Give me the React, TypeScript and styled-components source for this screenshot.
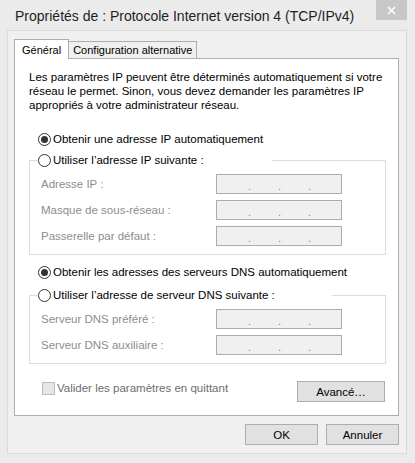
import styled, { createGlobalStyle } from 'styled-components';

const Global = createGlobalStyle`
  html, body {
    margin: 0;
    padding: 0;
    background: #ebebeb;
  }
  body {
    font-family: "Liberation Sans", Arial, sans-serif;
  }
`;

const Window = styled.div`
  width: 415px;
  height: 463px;
  box-sizing: border-box;
  padding: 0 8px 0 7px;
  background: #ebebeb;
  display: flex;
  flex-direction: column;
`;

const TitleBar = styled.div`
  height: 30px;
  display: flex;
  justify-content: space-between;
  align-items: flex-start;
`;

const Title = styled.div`
  padding: 7px 0 0 8px;
  font-size: 14px;
  line-height: 18px;
  color: #1e1e1e;
  white-space: nowrap;
`;

const Close = styled.div`
  width: 31px;
  height: 20px;
  flex-shrink: 0;
  background: #c7c7c7;
  display: flex;
  align-items: center;
  justify-content: center;
`;

const Client = styled.div`
  width: 400px;
  height: 424px;
  box-sizing: border-box;
  border: 1px solid #dadada;
  background: #f0f0f0;
  padding: 8px 7px 0 6px;
  display: flex;
  flex-direction: column;
`;

const TabStrip = styled.div`
  height: 19px;
  display: flex;
  align-items: flex-end;
`;

const Tab = styled.div<{ $active?: boolean }>`
  box-sizing: border-box;
  height: ${({ $active }) => ($active ? '20px' : '17px')};
  margin-bottom: ${({ $active }) => ($active ? '-1px' : '0')};
  margin-left: ${({ $active }) => ($active ? '0' : '-1px')};
  padding: ${({ $active }) => ($active ? '3px 7px 0 7px' : '1px 4px 0 4px')};
  border: 1px solid #adadad;
  border-bottom: none;
  background: ${({ $active }) => ($active ? '#fff' : '#f0f0f0')};
  position: relative;
  z-index: ${({ $active }) => ($active ? 2 : 1)};
  font-size: 11px;
  line-height: 14px;
  color: #000;
  white-space: nowrap;
`;

const Panel = styled.div`
  position: relative;
  z-index: 1;
  border: 1px solid #adadad;
  background: #fff;
  padding: 11px 0 13px 0;
  display: flex;
  flex-direction: column;
`;

const Intro = styled.p`
  margin: 0 14px;
  font-size: 11.5px;
  line-height: 14px;
  color: #000;
`;

const RadioRow = styled.div<{ $top: number }>`
  height: 16px;
  margin: ${({ $top }) => $top}px 0 0 23px;
  display: flex;
  align-items: center;
  gap: 2px;
  font-size: 11.5px;
  color: #000;
  white-space: nowrap;
`;

const Circle = styled.span<{ $checked?: boolean }>`
  width: 13px;
  height: 13px;
  box-sizing: border-box;
  border: 1px solid #333;
  border-radius: 50%;
  background: #fff;
  display: flex;
  align-items: center;
  justify-content: center;
  flex-shrink: 0;

  &::after {
    content: '';
    width: 7px;
    height: 7px;
    border-radius: 50%;
    background: #333;
    display: ${({ $checked }) => ($checked ? 'block' : 'none')};
  }
`;

const Group = styled.fieldset<{ $top: number }>`
  width: 357px;
  box-sizing: border-box;
  min-width: 0;
  margin: ${({ $top }) => $top}px 0 0 14px;
  padding: 6px 0 8px 0;
  border: 1px solid #dcdcdc;
`;

const Legend = styled.legend<{ $width: number }>`
  width: ${({ $width }) => $width}px;
  height: 16px;
  padding: 0;
  margin-left: 8px;
  display: flex;
  align-items: center;
  gap: 2px;
  font-size: 11.5px;
  color: #000;
  white-space: nowrap;
`;

const FieldGrid = styled.div`
  margin-left: 11px;
  display: grid;
  grid-template-columns: 175px 126px;
  row-gap: 6px;
  align-items: center;
`;

const Label = styled.span`
  font-size: 11.5px;
  color: #8d8d8d;
`;

const IpBox = styled.div`
  height: 20px;
  box-sizing: border-box;
  border: 1px solid #acacac;
  background: #f0f0f0;
  padding-left: 31px;
  display: flex;
  align-items: flex-end;
`;

const Dot = styled.span`
  width: 30px;
  font-size: 11px;
  line-height: 14px;
  color: #8a8a8a;
`;

const BottomRow = styled.div`
  margin: 17px 13px 0 27px;
  display: flex;
  justify-content: space-between;
  align-items: flex-start;
`;

const CheckLabel = styled.label`
  display: flex;
  align-items: center;
  gap: 2px;
  height: 14px;
  font-size: 11.5px;
  color: #6d6d6d;
`;

const CheckBox = styled.span`
  width: 13px;
  height: 13px;
  box-sizing: border-box;
  border: 1px solid #bcbcbc;
  background: #e6e6e6;
`;

const Button = styled.button<{ $width: number }>`
  width: ${({ $width }) => $width}px;
  height: 21px;
  box-sizing: border-box;
  padding: 0;
  border: 1px solid #adadad;
  background: #e1e1e1;
  font-family: "Liberation Sans", Arial, sans-serif;
  font-size: 11.5px;
  color: #000;
`;

const Footer = styled.div`
  margin-top: 8px;
  display: flex;
  justify-content: flex-end;
  gap: 8px;
`;

const IpField = () => (
  <IpBox>
    <Dot>.</Dot>
    <Dot>.</Dot>
    <Dot>.</Dot>
  </IpBox>
);

const ipRows = ['Adresse IP :', 'Masque de sous-réseau :', 'Passerelle par défaut :'];
const dnsRows = ['Serveur DNS préféré :', 'Serveur DNS auxiliaire :'];

export default function App() {
  return (
    <>
      <Global />
      <Window>
        <TitleBar>
          <Title>Propriétés de : Protocole Internet version 4 (TCP/IPv4)</Title>
          <Close>
            <svg width="9" height="9" viewBox="0 0 9 9">
              <path d="M1 1L8 8M8 1L1 8" stroke="#fff" strokeWidth="1.6" />
            </svg>
          </Close>
        </TitleBar>
        <Client>
          <TabStrip>
            <Tab $active>Général</Tab>
            <Tab>Configuration alternative</Tab>
          </TabStrip>
          <Panel>
            <Intro>
              Les paramètres IP peuvent être déterminés automatiquement si votre
              <br />
              réseau le permet. Sinon, vous devez demander les paramètres IP
              <br />
              appropriés à votre administrateur réseau.
            </Intro>

            <RadioRow $top={19}>
              <Circle $checked />
              Obtenir une adresse IP automatiquement
            </RadioRow>
            <Group $top={5}>
              <Legend $width={234}>
                <Circle />
                Utiliser l’adresse IP suivante :
              </Legend>
              <FieldGrid>
                {ipRows.map((row) => [
                  <Label key={row}>{row}</Label>,
                  <IpField key={row + '-f'} />,
                ])}
              </FieldGrid>
            </Group>

            <RadioRow $top={9}>
              <Circle $checked />
              Obtenir les adresses des serveurs DNS automatiquement
            </RadioRow>
            <Group $top={7}>
              <Legend $width={294}>
                <Circle />
                Utiliser l’adresse de serveur DNS suivante :
              </Legend>
              <FieldGrid>
                {dnsRows.map((row) => [
                  <Label key={row}>{row}</Label>,
                  <IpField key={row + '-f'} />,
                ])}
              </FieldGrid>
            </Group>

            <BottomRow>
              <CheckLabel>
                <CheckBox />
                Valider les paramètres en quittant
              </CheckLabel>
              <Button $width={88}>Avancé…</Button>
            </BottomRow>
          </Panel>
          <Footer>
            <Button $width={73}>OK</Button>
            <Button $width={73}>Annuler</Button>
          </Footer>
        </Client>
      </Window>
    </>
  );
}
